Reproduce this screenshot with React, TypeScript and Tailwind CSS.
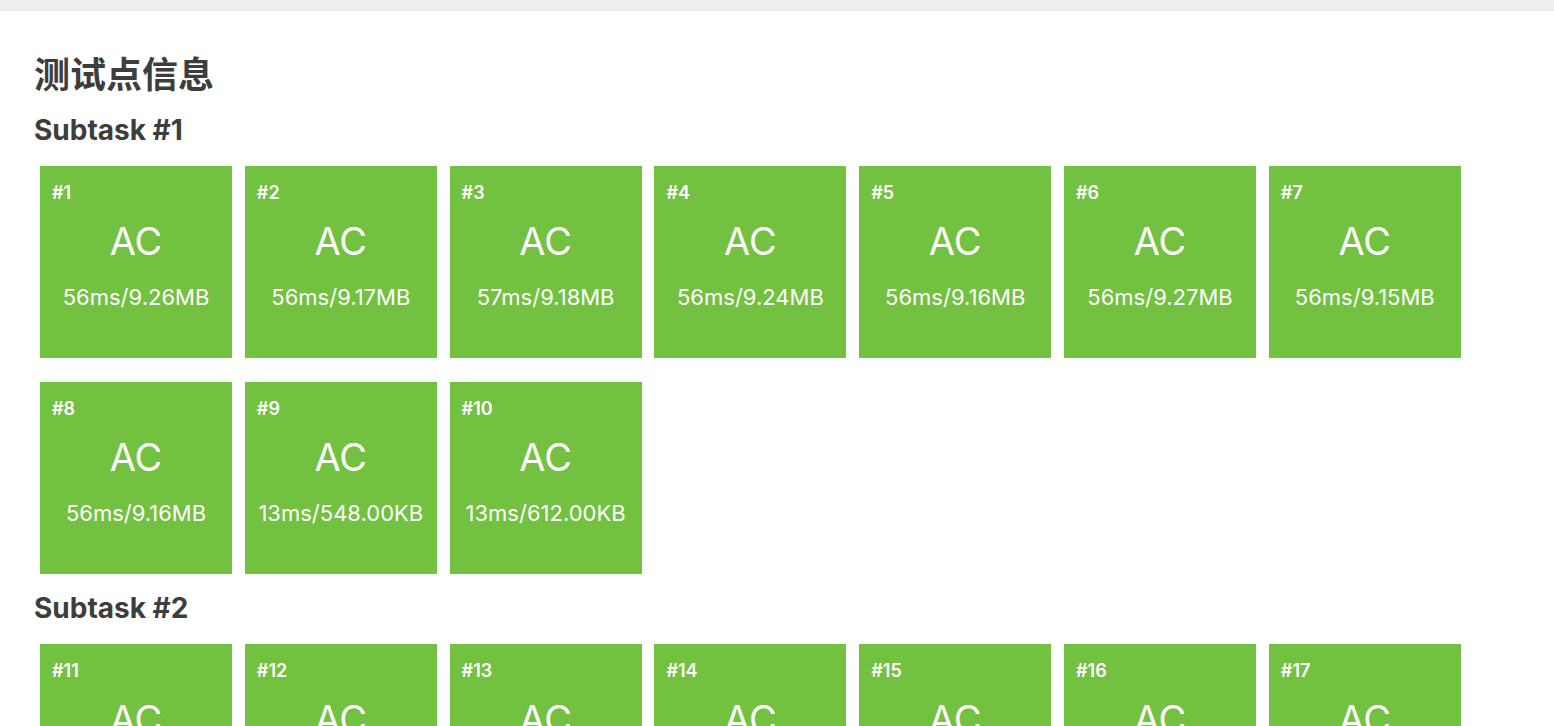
import React from 'react';

interface TestCase {
  id: number;
  time: string;
  memory: string;
}

interface Subtask {
  title: string;
  cases: TestCase[];
}

const SUBTASKS: Subtask[] = [
  {
    title: 'Subtask #1',
    cases: [
      { id: 1, time: '56ms', memory: '9.26MB' },
      { id: 2, time: '56ms', memory: '9.17MB' },
      { id: 3, time: '57ms', memory: '9.18MB' },
      { id: 4, time: '56ms', memory: '9.24MB' },
      { id: 5, time: '56ms', memory: '9.16MB' },
      { id: 6, time: '56ms', memory: '9.27MB' },
      { id: 7, time: '56ms', memory: '9.15MB' },
      { id: 8, time: '56ms', memory: '9.16MB' },
      { id: 9, time: '13ms', memory: '548.00KB' },
      { id: 10, time: '13ms', memory: '612.00KB' },
    ],
  },
  {
    title: 'Subtask #2',
    cases: [
      { id: 11, time: '56ms', memory: '9.21MB' },
      { id: 12, time: '56ms', memory: '9.19MB' },
      { id: 13, time: '57ms', memory: '9.22MB' },
      { id: 14, time: '56ms', memory: '9.18MB' },
      { id: 15, time: '56ms', memory: '9.25MB' },
      { id: 16, time: '56ms', memory: '9.16MB' },
      { id: 17, time: '56ms', memory: '9.20MB' },
    ],
  },
];

const CaseCard = ({ item }: { item: TestCase }) => (
  <div className="w-[192px] h-[192px] bg-[#73c141] text-white flex flex-col px-3 pt-[15px]">
    <div className="text-[18px] leading-[24px] font-semibold">#{item.id}</div>
    <div className="text-center text-[38px] leading-[44px] mt-[14px]">AC</div>
    <div className="text-center text-[22px] leading-[28px] mt-[20px] whitespace-nowrap">
      {item.time}/{item.memory}
    </div>
  </div>
);

export default function App() {
  return (
    <div className="min-h-screen bg-white text-[#3d3d3d] font-['Inter','Noto_Sans_CJK_SC',sans-serif]">
      <div className="h-[11px] bg-[#efefef] border-b border-[#e6e6e6]" />
      <div className="px-[34px] pt-[42px]">
        <h1 className="text-[36px] leading-[44px] font-bold mb-[15px]">测试点信息</h1>
        {SUBTASKS.map((sub) => (
          <section key={sub.title}>
            <h2 className="text-[28px] leading-[36px] font-bold mt-[2px] mb-[18px]">{sub.title}</h2>
            <div className="flex flex-wrap gap-x-[12.8px] gap-y-[24px] pl-[6px] pb-[14px]">
              {sub.cases.map((c) => (
                <CaseCard key={c.id} item={c} />
              ))}
            </div>
          </section>
        ))}
      </div>
    </div>
  );
}
